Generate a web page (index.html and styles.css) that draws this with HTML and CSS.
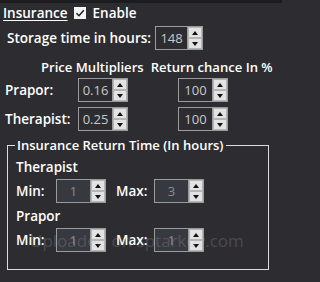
FILE: index.html
```html
<!DOCTYPE html>
<html>
<head>
<meta charset="utf-8">
<link rel="stylesheet" href="styles.css">
</head>
<body>
<div class="panel">
  <div class="row-head">
    <span class="title">Insurance</span>
    <span class="check"><svg viewBox="0 0 12 12" width="12" height="12"><path d="M2.5 6.2 L5 8.7 L9.8 3.2" fill="none" stroke="#222" stroke-width="1.6"/></svg></span>
    <span class="lbl">Enable</span>
  </div>
  <div class="row-storage">
    <span class="lbl">Storage time in hours:</span>
    <div class="spin w48"><span class="val">148</span><span class="btns"><span class="up"></span><span class="dn"></span></span></div>
  </div>
  <div class="row-cols">
    <span class="lbl">Price Multipliers</span>
    <span class="lbl">Return chance In %</span>
  </div>
  <div class="grid-mult">
    <span class="lbl">Prapor:</span>
    <div class="spin w50"><span class="val">0.16</span><span class="btns"><span class="up"></span><span class="dn"></span></span></div>
    <div class="spin w50"><span class="val">100</span><span class="btns"><span class="up"></span><span class="dn"></span></span></div>
    <span class="lbl">Therapist:</span>
    <div class="spin w50"><span class="val">0.25</span><span class="btns"><span class="up"></span><span class="dn"></span></span></div>
    <div class="spin w50"><span class="val">100</span><span class="btns"><span class="up"></span><span class="dn"></span></span></div>
  </div>
  <fieldset class="group">
    <legend class="lbl">Insurance Return Time (In hours)</legend>
    <div class="sub lbl">Therapist</div>
    <div class="minmax">
      <span class="lbl">Min:</span>
      <div class="spin dis w50"><span class="val">1</span><span class="btns"><span class="up"></span><span class="dn"></span></span></div>
      <span class="lbl">Max:</span>
      <div class="spin dis w50"><span class="val">3</span><span class="btns"><span class="up"></span><span class="dn"></span></span></div>
    </div>
    <div class="sub lbl">Prapor</div>
    <div class="minmax">
      <span class="lbl">Min:</span>
      <div class="spin dis w50"><span class="val">1</span><span class="btns"><span class="up"></span><span class="dn"></span></span></div>
      <span class="lbl">Max:</span>
      <div class="spin dis w50"><span class="val">1</span><span class="btns"><span class="up"></span><span class="dn"></span></span></div>
    </div>
  </fieldset>
  <div class="watermark">Uploaded on sptarkov.com</div>
</div>
</body>
</html>
```
FILE: styles.css
```css
html, body {
  margin: 0;
  padding: 0;
  background: #2d2d31;
}
.panel {
  position: relative;
  width: 282px;
  height: 282px;
  box-sizing: border-box;
  border-top: 3px solid #1c1c1f;
  font-family: "Open Sans", "Noto Sans", sans-serif;
  font-weight: 600;
  font-size: 13.5px;
  color: #ffffff;
  overflow: hidden;
}
.lbl {
  white-space: nowrap;
  line-height: 18px;
}
.row-head {
  display: flex;
  align-items: center;
  height: 20px;
  padding-left: 3px;
}
.title {
  text-decoration: underline;
  text-underline-offset: 2px;
  line-height: 18px;
}
.check {
  width: 12px;
  height: 12px;
  background: #f4f4f4;
  margin-left: 6px;
  margin-right: 7px;
  display: flex;
}
.row-storage {
  display: flex;
  align-items: center;
  margin-top: 3px;
  padding-left: 7px;
  gap: 4px;
}
.row-cols {
  display: flex;
  margin-top: 8px;
  padding-left: 41px;
  gap: 7px;
  font-size: 13.1px;
}
.grid-mult {
  display: grid;
  grid-template-columns: 73px 100px 50px;
  row-gap: 5px;
  align-items: center;
  padding-left: 5px;
  margin-top: 2px;
}
.spin {
  display: flex;
  height: 24px;
  box-sizing: border-box;
  border: 1px solid #9b9b9b;
  background: #2d2d31;
}
.w48 { width: 48px; }
.w50 { width: 50px; }
.val {
  flex: 1;
  text-align: center;
  color: #c9c9c9;
  font-weight: 400;
  font-size: 13px;
  line-height: 22px;
}
.btns {
  width: 14px;
  display: flex;
  flex-direction: column;
  border-left: 1px solid #9b9b9b;
}
.up, .dn {
  flex: 1;
  background: #e3e3e3;
  border: 1px solid #b5b5b5;
  position: relative;
}
.up::after, .dn::after {
  content: "";
  position: absolute;
  left: 3px;
  top: 3px;
  border-left: 3px solid transparent;
  border-right: 3px solid transparent;
}
.up::after { border-bottom: 4px solid #111; }
.dn::after { border-top: 4px solid #111; }
.dis {
  background: #373941;
}
.dis .val { color: #8b8d93; }
.group {
  margin: 5px 0 0 7px;
  width: 262px;
  box-sizing: border-box;
  border: 1px solid #dcdcdc;
  padding: 0 8px 17px 8px;
}
.group legend {
  font-size: 13px;
  padding: 0 3px 0 2px;
  margin-left: -1px;
}
.sub {
  margin-top: 4px;
}
.minmax {
  display: flex;
  align-items: center;
  margin-top: 3px;
}
.minmax .lbl:first-child { width: 40px; }
.minmax .spin:nth-child(2) { margin-right: 10px; }
.minmax .lbl:nth-child(3) { width: 38px; }
.watermark {
  position: absolute;
  left: 30px;
  top: 226px;
  font-family: "Open Sans", sans-serif;
  font-weight: 400;
  font-size: 17px;
  color: rgba(200, 200, 200, 0.2);
  white-space: nowrap;
  pointer-events: none;
}
```
